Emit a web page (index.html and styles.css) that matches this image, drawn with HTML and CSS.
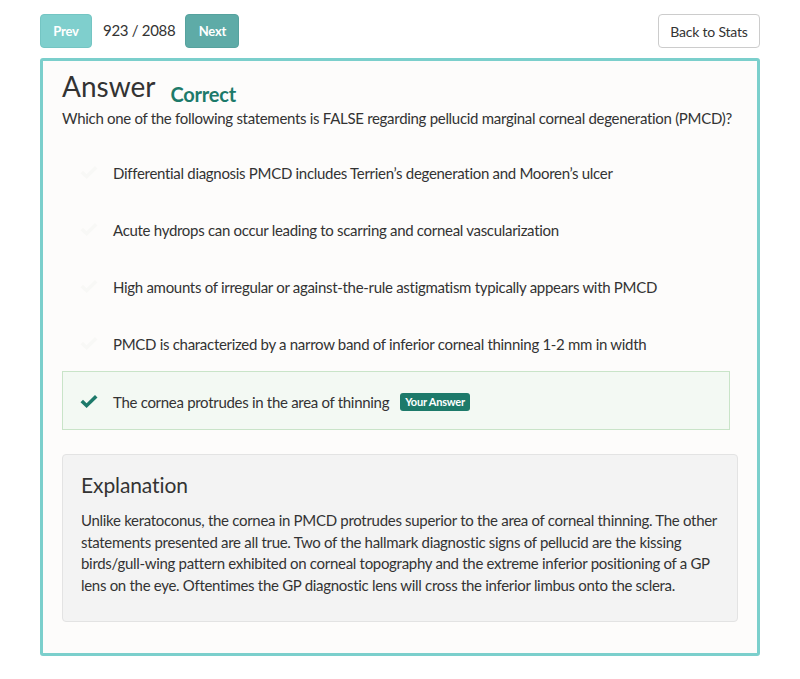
FILE: index.html
```html
<!DOCTYPE html>
<html lang="en">
<head>
<meta charset="utf-8">
<title>Answer</title>
<link rel="stylesheet" href="styles.css">
</head>
<body>
<div class="page">
  <div class="toolbar">
    <div class="pager">
      <button class="btn btn-prev">Prev</button>
      <span class="count">923 / 2088</span>
      <button class="btn btn-next">Next</button>
    </div>
    <button class="btn btn-back">Back to Stats</button>
  </div>

  <div class="card">
    <div class="title-row">
      <h1 class="title">Answer</h1>
      <span class="status">Correct</span>
    </div>
    <p class="question">Which one of the following statements is FALSE regarding pellucid marginal corneal degeneration (PMCD)?</p>

    <ul class="options">
      <li class="option">
        <svg class="check" viewBox="0 0 20 15"><path d="M1.5 8.2 L4 5.8 L7.6 9.2 L16 1 L18.5 3.5 L7.6 14 Z"/></svg>
        <span>Differential diagnosis PMCD includes Terrien’s degeneration and Mooren’s ulcer</span>
      </li>
      <li class="option">
        <svg class="check" viewBox="0 0 20 15"><path d="M1.5 8.2 L4 5.8 L7.6 9.2 L16 1 L18.5 3.5 L7.6 14 Z"/></svg>
        <span>Acute hydrops can occur leading to scarring and corneal vascularization</span>
      </li>
      <li class="option">
        <svg class="check" viewBox="0 0 20 15"><path d="M1.5 8.2 L4 5.8 L7.6 9.2 L16 1 L18.5 3.5 L7.6 14 Z"/></svg>
        <span>High amounts of irregular or against-the-rule astigmatism typically appears with PMCD</span>
      </li>
      <li class="option">
        <svg class="check" viewBox="0 0 20 15"><path d="M1.5 8.2 L4 5.8 L7.6 9.2 L16 1 L18.5 3.5 L7.6 14 Z"/></svg>
        <span>PMCD is characterized by a narrow band of inferior corneal thinning 1-2 mm in width</span>
      </li>
      <li class="option option-selected">
        <svg class="check" viewBox="0 0 20 15"><path d="M1.5 8.2 L4 5.8 L7.6 9.2 L16 1 L18.5 3.5 L7.6 14 Z"/></svg>
        <span>The cornea protrudes in the area of thinning</span>
        <span class="badge">Your Answer</span>
      </li>
    </ul>

    <div class="explanation">
      <h2 class="exp-title">Explanation</h2>
      <p class="exp-text">Unlike keratoconus, the cornea in PMCD protrudes superior to the area of corneal thinning. The other statements presented are all true. Two of the hallmark diagnostic signs of pellucid are the kissing birds/gull-wing pattern exhibited on corneal topography and the extreme inferior positioning of a GP lens on the eye. Oftentimes the GP diagnostic lens will cross the inferior limbus onto the sclera.</p>
    </div>
  </div>
</div>
</body>
</html>
```

FILE: styles.css
```css
* { box-sizing: border-box; }

html, body {
  margin: 0;
  padding: 0;
  background: #ffffff;
}

body {
  font-family: "Lato", "Open Sans", sans-serif;
  color: #333333;
  font-size: 15px;
  letter-spacing: -0.3px;
}

.page {
  padding: 14px 40px 0 40px;
}

.toolbar {
  display: flex;
  justify-content: space-between;
  align-items: center;
  height: 34px;
}

.pager {
  display: flex;
  align-items: center;
}

.btn {
  font-family: inherit;
  height: 34px;
  border-radius: 4px;
  font-size: 13px;
  cursor: pointer;
  padding: 0;
  letter-spacing: -0.2px;
}

.btn-prev {
  background: #7fcfcd;
  border: 1px solid #74c5c3;
  color: #ffffff;
  font-weight: 700;
  width: 52px;
}

.btn-next {
  background: #5eaba7;
  border: 1px solid #56a29e;
  color: #ffffff;
  font-weight: 700;
  width: 54px;
}

.count {
  font-size: 15px;
  color: #333;
  margin: 0 10px 0 11px;
  position: relative;
  top: -1px;
}

.btn-back {
  background: #ffffff;
  border: 1px solid #cccccc;
  color: #333333;
  font-size: 14px;
  width: 102px;
}

.card {
  margin-top: 10px;
  border: 3px solid #7bcfcc;
  border-radius: 3px;
  background: #fdfcfb;
  padding: 7px 19px 32px 19px;
  height: 598px;
}

.title-row {
  display: flex;
  align-items: baseline;
}

.title {
  margin: 0;
  font-size: 28px;
  font-weight: 400;
  color: #333;
  line-height: 36px;
  letter-spacing: 0;
}

.status {
  margin-left: 15px;
  font-size: 20px;
  font-weight: 700;
  color: #1d7a6a;
  position: relative;
  top: 5px;
  letter-spacing: -0.2px;
}

.question {
  margin: 4px 0 0 0;
  font-size: 15px;
  line-height: 20px;
}

.options {
  list-style: none;
  margin: 16px 0 0 0;
  padding: 0;
  width: 668px;
}

.option {
  display: flex;
  align-items: center;
  height: 57px;
  border: 1px solid transparent;
  padding-left: 16px;
  font-size: 15px;
}

.check {
  width: 20px;
  height: 15px;
  margin-right: 14px;
  fill: #f8f8f6;
  flex: none;
}

.option-selected {
  background: #f3f9f3;
  border-color: #c9e4c8;
  height: 59px;
  margin-top: -1px;
  padding-top: 2px;
}

.option-selected .check {
  fill: #1d7a6a;
}

.badge {
  margin-left: 11px;
  background: #1d7a6a;
  color: #ffffff;
  font-size: 11px;
  font-weight: 700;
  padding: 3px 5px;
  border-radius: 3px;
  line-height: 12px;
  letter-spacing: -0.2px;
}

.explanation {
  margin-top: 24px;
  width: 676px;
  background: #f3f3f3;
  border: 1px solid #e3e3e3;
  border-radius: 4px;
  padding: 16px 19px 24px 18px;
}

.exp-title {
  margin: 0;
  font-size: 21px;
  font-weight: 400;
  line-height: 28px;
  color: #333;
  letter-spacing: -0.1px;
}

.exp-text {
  margin: 11px 0 0 0;
  font-size: 15px;
  line-height: 21.7px;
}
```
